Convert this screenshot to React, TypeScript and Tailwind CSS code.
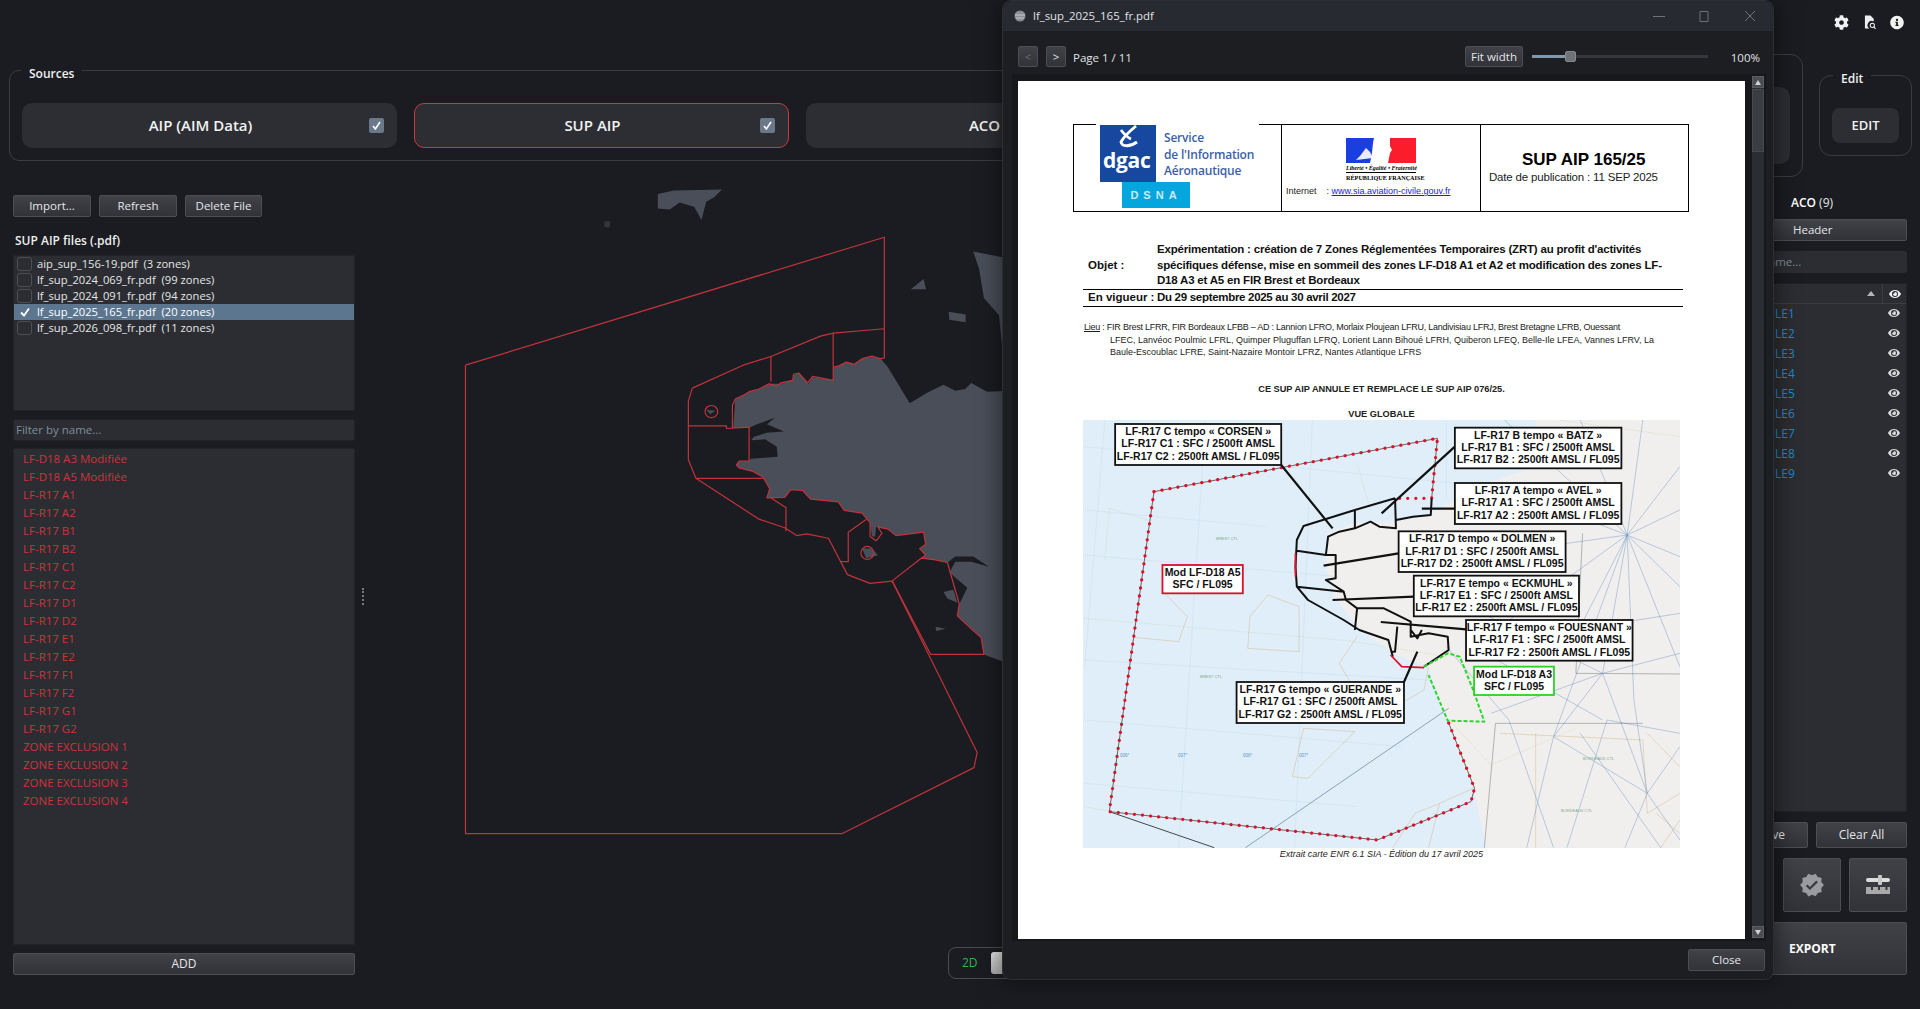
import { FaCog, FaEye, FaInfoCircle } from 'react-icons/fa'
import { MdVerified } from 'react-icons/md'

const files = [
  { name: 'aip_sup_156-19.pdf', zones: 3 },
  { name: 'lf_sup_2024_069_fr.pdf', zones: 99 },
  { name: 'lf_sup_2024_091_fr.pdf', zones: 94 },
  { name: 'lf_sup_2025_165_fr.pdf', zones: 20, checked: true },
  { name: 'lf_sup_2026_098_fr.pdf', zones: 11 },
]

const zones = [
  'LF-D18 A3 Modifiée', 'LF-D18 A5 Modifiée', 'LF-R17 A1', 'LF-R17 A2', 'LF-R17 B1', 'LF-R17 B2', 'LF-R17 C1',
  'LF-R17 C2', 'LF-R17 D1', 'LF-R17 D2', 'LF-R17 E1', 'LF-R17 E2', 'LF-R17 F1', 'LF-R17 F2', 'LF-R17 G1', 'LF-R17 G2',
  'ZONE EXCLUSION 1', 'ZONE EXCLUSION 2', 'ZONE EXCLUSION 3', 'ZONE EXCLUSION 4',
]

const aco = ['LE1', 'LE2', 'LE3', 'LE4', 'LE5', 'LE6', 'LE7', 'LE8', 'LE9']

const chartLabels = [
  { x: 258, y: 72, w: 372, h: 123, color: '#111', lines: ['LF-R17 C tempo « CORSEN »', 'LF-R17 C1 : SFC / 2500ft AMSL', 'LF-R17 C2 : 2500ft AMSL / FL095'] },
  { x: 1019, y: 83, w: 373, h: 122, color: '#111', lines: ['LF-R17 B tempo « BATZ »', 'LF-R17 B1 : SFC / 2500ft AMSL', 'LF-R17 B2 : 2500ft AMSL / FL095'] },
  { x: 1019, y: 249, w: 373, h: 123, color: '#111', lines: ['LF-R17 A tempo « AVEL »', 'LF-R17 A1 : SFC / 2500ft AMSL', 'LF-R17 A2 : 2500ft AMSL / FL095'] },
  { x: 893, y: 394, w: 374, h: 122, color: '#111', lines: ['LF-R17 D tempo « DOLMEN »', 'LF-R17 D1 : SFC / 2500ft AMSL', 'LF-R17 D2 : 2500ft AMSL / FL095'] },
  { x: 927, y: 527, w: 370, h: 122, color: '#111', lines: ['LF-R17 E tempo « ECKMUHL »', 'LF-R17 E1 : SFC / 2500ft AMSL', 'LF-R17 E2 : 2500ft AMSL / FL095'] },
  { x: 1044, y: 660, w: 373, h: 122, color: '#111', lines: ['LF-R17 F tempo « FOUESNANT »', 'LF-R17 F1 : SFC / 2500ft AMSL', 'LF-R17 F2 : 2500ft AMSL / FL095'] },
  { x: 530, y: 846, w: 375, h: 123, color: '#111', lines: ['LF-R17 G tempo « GUERANDE »', 'LF-R17 G1 : SFC / 2500ft AMSL', 'LF-R17 G2 : 2500ft AMSL / FL095'] },
  { x: 364, y: 495, w: 180, h: 85, color: '#d8102a', lines: ['Mod LF-D18 A5', 'SFC / FL095'] },
  { x: 1062, y: 800, w: 179, h: 85, color: '#27d327', lines: ['Mod LF-D18 A3', 'SFC / FL095'] },
]

function Btn({ children, className }: { children?: React.ReactNode; className?: string }) {
  return (
    <div className={'flex items-center justify-center rounded-[2px] border border-[#4c4e53] bg-gradient-to-b from-[#404247] to-[#313338] text-[#e4e6ea] text-[11.5px] ' + (className || '')}>
      {children}
    </div>
  )
}

function GroupLabel({ text, left }: { text: string; left: string }) {
  return <span className={'absolute -top-[4px] bg-[#1b1c21] px-[8px] text-[12px] font-semibold text-[#f0f0f0] leading-[14px] ' + left}>{text}</span>
}

function Check() {
  return (
    <svg viewBox="0 0 15 15" className="w-[15px] h-[15px] rounded-[2px] bg-[#6b7889]">
      <path d="M4 8l2.4 3L11 4" fill="none" stroke="#fff" strokeWidth="1.6" />
    </svg>
  )
}

function SourceCard({ label, active }: { label: string; active?: boolean }) {
  return (
    <div className={'w-[375px] h-[45px] rounded-[10px] bg-[#2c2e33] flex items-center pl-[10px] pr-[13px] ' + (active ? 'border border-[#d0383c]' : '')}>
      <span className="flex-1 text-center text-[15px] font-semibold text-[#f2f2f2]">{label}</span>
      <Check />
    </div>
  )
}

function BrittanyMap() {
  const red = { fill: 'none', stroke: '#c1333b', strokeWidth: 1.2, vectorEffect: 'non-scaling-stroke' as const, strokeLinejoin: 'round' as const }
  return (
    <svg viewBox="0 0 1563 1568" preserveAspectRatio="none" className="absolute left-[28px] top-[3px] w-[620px] h-[680px]">
      <g fill="#4a4e59">
        <path d="M650,32 L690,24 L812,22 L792,40 L772,50 L760,92 L742,62 L705,52 L680,68 L650,66Z" />
        <path d="M1445,165 L1563,186 L1563,400 L1523,430 L1510,312 L1472,272 L1460,205Z" />
        <path d="M1288,252 L1320,228 L1326,252Z M1383,304 L1426,310 L1426,328 L1385,322Z" />
        <path d="M1563,485 L1480,488 L1440,468 L1425,482 L1400,486 L1370,472 L1330,490 L1285,515 L1262,480 L1230,432 L1212,412 L1190,408 L1165,412 L1145,425 L1125,420 L1108,428 L1092,434 L1092,462 L1040,455 L1030,470 L1005,445 L992,450 L990,462 L960,470 L930,470 L905,482 L880,488 L868,495 L845,505 L840,572 L880,572 L895,565 L945,548 L925,563 L968,580 L925,583 L892,592 L885,600 L920,598 L950,615 L952,638 L885,643 L880,648 L855,648 L848,657 L855,664 L890,672 L915,685 L932,712 L925,733 L970,732 L985,714 L1015,716 L1035,736 L1105,742 L1120,762 L1165,768 L1185,790 L1190,822 L1198,822 L1200,800 L1230,805 L1250,820 L1320,812 L1325,840 L1310,850 L1325,865 L1314,872 L1350,876 L1380,882 L1400,868 L1445,868 L1485,892 L1440,880 L1400,880 L1385,905 L1430,940 L1410,978 L1405,1005 L1440,1035 L1465,1055 L1472,1094 L1563,1125Z" />
        <path d="M1370,950 L1395,945 L1405,975 L1380,965Z M1350,1030 L1375,1035 L1352,1040Z M772,530 L795,532 L782,540Z M1165,850 L1190,850 L1205,865 L1175,872Z" />
      </g>
      <path d="M515,95 L530,95 L528,110 L515,108Z" fill="#33363f" />
      <path {...red} d="M165,427 L1221,132 L1221,410 L1210,412 L1190,406 L1165,412 L1145,425 L1125,420 L1108,428 L1092,432" />
      <path {...red} d="M737,480 L865,427 L935,407 L1060,360 L1092,353 L1221,343" />
      <path {...red} d="M165,427 L165,1507 L1115,1507 L1447,1355 L1455,1320 L1241,925" />
      <path {...red} d="M1092,353 L1092,462 L1040,453 L1028,468 L1005,445 L992,448 L990,462 L960,468 L950,475 L930,470 L905,482 L880,488 L868,495 L845,505 L838,520 L838,572" />
      <path {...red} d="M935,407 L935,465" />
      <path {...red} d="M737,480 L727,510 L727,645 L746,688 L905,782 L970,802 L1000,820 L1025,816 L1080,826 L1128,910 L1185,930 L1240,925 L1314,872 L1350,876 L1380,882 L1410,978" />
      <path {...red} d="M727,567 L823,567 L823,573 L880,570 L880,648 L855,648 L848,657 L855,664 L890,672 L915,685 L932,712 L925,733 L970,732 L985,714 L1015,716 L1035,736 L1105,742 L1120,762 L1165,768 L1185,790 L1185,822 L1200,832 L1215,815 L1205,800 L1230,805 L1250,820 L1320,812 L1325,840 L1310,850 L1325,865 L1314,872" />
      <path {...red} d="M746,688 L915,688 M935,733 L973,755 L973,810 M1175,783 L1130,812 L1130,880 L1110,880" />
      <path {...red} d="M1241,925 L1338,1094 L1472,1094 L1465,1055 L1440,1035 L1405,1005 L1410,978" />
      <ellipse {...red} cx="785" cy="534" rx="16" ry="14" />
      <ellipse {...red} cx="1178" cy="860" rx="16" ry="15" />
    </svg>
  )
}

function AipChart() {
  const ns = { vectorEffect: 'non-scaling-stroke' as const, fill: 'none', strokeLinejoin: 'round' as const }
  return (
    <svg viewBox="0 0 597 428" className="block w-[597px] h-[428px] ml-[10px]">
      <rect width="597" height="428" fill="#dfeef9" />
      <g transform="scale(0.44643 0.33333) translate(-186 -60)">
        <path fill="#f0efed" d="M1200,60 L1523,60 L1523,1343 L1090,1343 L1060,1165 L1000,960 L960,800 L880,760 L800,680 L750,590 L730,500 L735,400 L790,370 L885,365 L960,345 L1020,300 L1090,250 L1200,200Z" />
        <g {...ns} stroke="#bfd6e8" strokeWidth="0.8">
          <path d="M190,140 L1020,250 M190,465 L760,530 M190,780 L960,840 M190,960 L900,1040 M460,60 L400,1343 M700,60 L660,1343 M235,60 L190,800 M1000,60 L1000,300 M190,330 L600,380 M190,1150 L800,1220" />
        </g>
        <g {...ns} stroke="#d6b583" strokeWidth="1.2">
          <path d="M365,575 L420,650 L400,725 L300,712 M600,585 L670,620 L670,755 L555,745 L560,650Z M680,985 L795,995 L690,1135 L655,1130Z M1060,1165 L985,1210 L930,1240 L880,1343 M985,1210 L960,1343 M800,710 L760,790 L795,870 L905,905 L950,870 L960,800 M1120,1000 L1440,1020 L1450,1240 L1523,1180 M1200,1000 L1200,1343 M1480,1343 L1523,1260 M1450,1000 L1523,1100 M1470,1240 L1523,1300" />
        </g>
        <g {...ns} stroke="#a9cc78" strokeWidth="1.1" strokeDasharray="2 3">
          <path d="M245,325 L335,362 M245,325 L235,480 M188,655 L780,722 L1000,770 M188,1220 L250,1235 M1020,980 L1100,1095 L1290,985 M800,190 L830,330 M1250,60 L1523,110" />
        </g>
        <g {...ns} stroke="#6a8fc4" strokeWidth="1.1">
          <path d="M1405,405 L1300,60 M1405,405 L1523,200 M1405,405 L1180,290 M1405,405 L1130,60 M1405,405 L1523,470 M1405,405 L1350,820 M1405,405 L1523,800 M1405,405 L1100,700 M1405,405 L1240,1010 M1350,820 L1450,1180 M1350,820 L1100,940 M1350,820 L1523,760 M1450,1180 L1400,1343 M1450,1180 L1523,1040 M1450,1180 L1240,1010 M1450,1180 L1523,1320 M1140,960 L1240,1343 M1360,960 L1270,1343 M1050,620 L1350,820 M1000,740 L1140,960 M1440,60 L1405,405 M1405,405 L1420,900 M1405,405 L1300,680 M1350,820 L1240,1010 M1240,700 L1523,640 M1100,770 L1350,960 M1360,960 L1523,1000 M1420,900 L1450,1180 M1405,405 L1523,330 M1405,405 L1523,560 M1405,405 L1000,480 M1300,1000 L1480,1343 M1240,1010 L1180,1343" />
        </g>
        <g {...ns} stroke="#5d6168" strokeWidth="1.1">
          <path d="M1085,1343 L1110,970 L1440,970 M1290,820 L1523,822 M1305,400 L1290,820" />
        </g>
        <path {...ns} stroke="#44484c" strokeWidth="1" d="M245,1235 L480,1343" />
        <path {...ns} stroke="#8fa1b8" strokeWidth="1" d="M550,1343 L1005,925" />
        <path {...ns} stroke="#444" strokeWidth="0.8" d="M345,275 L980,115 L967,295 M345,275 L245,1235 L845,1320 L1055,1205 L1063,1165 L1003,962" />
        <path {...ns} stroke="#e00f26" strokeWidth="3.2" strokeLinecap="round" strokeDasharray="0.1 8" d="M345,275 L980,115 L967,295 L885,295 M345,275 L245,1235 L845,1320 L1055,1205 L1063,1165 L1003,962" />
        <path {...ns} stroke="#111" strokeWidth="2" d="M885,295 L795,330 L680,378 L665,420 L662,500 L665,560 L690,600 L770,660 L805,690 L870,720 L880,770 M885,295 L887,385 L850,380 L830,365 L795,385 L760,395 L735,410 L730,465 L665,452 M730,465 L752,465 L752,535 L730,540 L770,575 L775,600 L800,625 L860,625 L920,665 L920,710 L960,700 L1003,710 L1005,750 L950,800 M665,560 L770,575 M800,625 L795,690 M890,680 L885,755 L875,755 M795,330 L795,385 M887,360 L925,350 L965,345 L967,295 M920,690 L935,715 L945,690" />
        <path {...ns} stroke="#dc1228" strokeWidth="1.8" d="M875,765 L900,800 L950,803 M662,460 L662,530" />
        <path {...ns} stroke="#111" strokeWidth="2.2" d="M630,195 L745,385 M1019,140 L855,340 M945,326 L1019,326 M725,497 L893,460 M745,600 L927,590 M853,666 L1044,688 M905,846 L935,755" />
        <path {...ns} stroke="#2fd52f" strokeWidth="2" strokeDasharray="4 2" d="M950,800 L1003,760 L1030,770 L1060,870 L1085,965 L1003,962 L960,825" />
      </g>
      <g className="font-['Liberation_Sans',sans-serif]">
        {[['BREST CTL', 133, 120], ['BREST CTL', 117, 258], ['BORDEAUX CTL', 500, 340], ['BORDEAUX CTL', 478, 392]].map(([t, x, y], i) => (
          <text key={i} x={x} y={y} fontSize="4" fill="#7fa886">{t}</text>
        ))}
        {[['006°', 37, 337], ['007°', 95, 337], ['006°', 160, 337], ['007°', 216, 337]].map(([t, x, y], i) => (
          <text key={i} x={x} y={y} fontSize="4.5" fill="#5a95c8">{t}</text>
        ))}
        {chartLabels.map(l => {
          const x = (l.x - 186) / 2.24
          const y = (l.y - 60) / 3
          const w = l.w / 2.24
          const h = l.h / 3
          return (
            <g key={l.lines[0]}>
              <rect x={x} y={y} width={w} height={h} fill="#fff" stroke={l.color} strokeWidth="1.8" />
              {l.lines.map((t, i) => (
                <text key={t} x={x + w / 2} y={y + 11 + i * 12.3} textAnchor="middle" fontSize="10.5" fontWeight="700" fill="#111">{t}</text>
              ))}
            </g>
          )
        })}
      </g>
    </svg>
  )
}

function PdfPage() {
  return (
    <div className="flex-1 h-[858px] bg-white text-black font-['Liberation_Sans',sans-serif] overflow-hidden pt-[43px] pl-[55px]">
      <div className="w-[616px] h-[88px] border-[1.5px] border-black grid grid-cols-[207px_200px_1fr]">
        <div className="relative">
          <span className="absolute -top-[2px] left-[22px] w-[163px] h-[2px] bg-white" />
          <div className="absolute left-[26px] top-0 w-[56px] h-[57px] bg-[#17479e] overflow-hidden">
            <svg viewBox="0 0 56 57" className="absolute inset-0">
              <path d="M36,1 C30,6 24,11 21,17 C22,22 30,22 37,17 M21,5 C24,9 27,12 31,14" fill="none" stroke="#fff" strokeWidth="2.8" />
            </svg>
            <span className="absolute left-[3px] top-[20px] text-[21px] leading-[30px] font-bold text-white font-['Open_Sans',sans-serif] tracking-[-0.3px]">dgac</span>
          </div>
          <div className="absolute left-[48px] top-[57px] w-[68px] h-[26px] bg-[#05a6de] flex items-center justify-center text-[11px] font-bold tracking-[5px] text-[#c9ecf7]">DSNA</div>
          <div className="absolute left-[90px] top-[5px] text-[12px] leading-[16.5px] font-semibold text-[#3c5fa6] whitespace-nowrap font-['Open_Sans',sans-serif] tracking-[-0.2px]">
            <div>Service</div>
            <div>de l'Information</div>
            <div>Aéronautique</div>
          </div>
        </div>
        <div className="relative border-x-[1.5px] border-black">
          <div className="absolute left-[64px] top-[13px] w-[70px] h-[25px] flex">
            <div className="w-[32px] bg-[#1a3fe0]" />
            <div className="w-[8px] bg-white" />
            <div className="flex-1 bg-[#fb1c2c]" />
            <svg viewBox="0 0 70 25" className="absolute inset-0">
              <path d="M28,0 C26,8 27,14 24,25 L42,25 L44,15 L46,12 L44,8 L44,0Z" fill="#fff" />
              <path d="M14,18 L20,10 L24,14 L27,20 L10,22Z" fill="#fff" opacity="0.9" />
            </svg>
          </div>
          <div className="absolute left-[64px] top-[40px] w-[70px] border-b border-black text-center text-[6px] leading-[7px] font-bold italic whitespace-nowrap font-['Liberation_Serif',serif]">Liberté • Égalité • Fraternité</div>
          <div className="absolute left-[64px] top-[49px] w-[70px] text-center text-[6.2px] leading-[7px] font-bold whitespace-nowrap font-['Liberation_Serif',serif]">RÉPUBLIQUE FRANÇAISE</div>
          <div className="absolute left-[4px] top-[60px] text-[9px] leading-[12px] whitespace-nowrap text-[#222]">
            Internet<span className="ml-[10px]">: </span><span className="text-[#1a1aee] underline">www.sia.aviation-civile.gouv.fr</span>
          </div>
        </div>
        <div className="flex flex-col whitespace-nowrap pl-[8px]">
          <div className="mt-[25px] pl-[33px] text-[17px] leading-[20px] font-bold">SUP AIP 165/25</div>
          <div className="-mt-[1px] text-[11.5px] leading-[16px] tracking-[-0.18px] text-[#222]">Date de publication : 11 SEP 2025</div>
        </div>
      </div>

      <div className="mt-[30px] ml-[15px] flex items-center w-[590px] text-[11.5px] font-bold text-[#111]">
        <div className="w-[69px]">Objet :</div>
        <div className="flex-1 leading-[15.7px] whitespace-nowrap tracking-[-0.2px]">
          <div>Expérimentation : création de 7 Zones Réglementées Temporaires (ZRT) au profit d'activités</div>
          <div>spécifiques défense, mise en sommeil des zones LF-D18 A1 et A2 et modification des zones LF-</div>
          <div>D18 A3 et A5 en FIR Brest et Bordeaux</div>
        </div>
      </div>
      <div className="ml-[10px] w-[600px] h-[18px] border-y border-black flex items-center pl-[5px] text-[11.5px] font-bold text-[#111] whitespace-nowrap">
        <div className="w-[69px]">En vigueur :</div>
        <div className="tracking-[-0.3px]">Du 29 septembre 2025 au 30 avril 2027</div>
      </div>

      <div className="mt-[14px] ml-[11px] text-[9px] leading-[12.6px] whitespace-nowrap text-[#222]">
        <div className="tracking-[-0.24px]"><span className="underline">Lieu</span> : FIR Brest LFRR, FIR Bordeaux LFBB – AD : Lannion LFRO, Morlaix Ploujean LFRU, Landivisiau LFRJ, Brest Bretagne LFRB, Ouessant</div>
        <div className="ml-[26px]">LFEC, Lanvéoc Poulmic LFRL, Quimper Pluguffan LFRQ, Lorient Lann Bihoué LFRH, Quiberon LFEQ, Belle-Ile LFEA, Vannes LFRV, La</div>
        <div className="ml-[26px]">Baule-Escoublac LFRE, Saint-Nazaire Montoir LFRZ, Nantes Atlantique LFRS</div>
      </div>

      <div className="mt-[24px] w-[617px] text-center text-[9.2px] font-bold leading-[12px] text-[#222]">CE SUP AIP ANNULE ET REMPLACE LE SUP AIP 076/25.</div>
      <div className="mt-[13px] w-[617px] text-center text-[9.2px] font-bold leading-[12px] text-[#222]">VUE GLOBALE</div>
      <AipChart />
      <div className="w-[617px] text-center text-[9px] italic leading-[12px] text-[#222]">Extrait carte ENR 6.1 SIA - Édition du 17 avril 2025</div>
    </div>
  )
}

function PdfWindow() {
  return (
    <div className="absolute left-[1002px] top-0 w-[772px] h-[980px] rounded-[9px] bg-[#1c1e22] border border-[#2c2f34] shadow-[0_0_24px_rgba(0,0,0,0.55)] flex flex-col text-[#e0e2e6] text-[11.5px]">
      <div className="h-[30px] shrink-0 rounded-t-[9px] bg-[#272a30] flex items-center pl-[11px] pr-[16px]">
        <svg viewBox="0 0 12 12" className="w-[12px] h-[12px]">
          <circle cx="6" cy="6" r="5.5" fill="#8b8e94" />
          <path d="M1,5 H11 M2,8 H10" stroke="#d5d7da" strokeWidth="0.8" />
        </svg>
        <span className="ml-[7px] flex-1 text-[11.4px]">lf_sup_2025_165_fr.pdf</span>
        <svg viewBox="0 0 110 14" className="w-[110px] h-[14px] text-[#6f7278]" fill="none" stroke="currentColor" strokeWidth="1">
          <path d="M6,7.5 H18 M53,2.5 H61 V12.5 H53Z M98,2 L108,12 M108,2 L98,12" />
        </svg>
      </div>
      <div className="h-[43px] shrink-0 flex items-start pt-[15px] pl-[15px] pr-[13px]">
        <Btn className="w-[20px] h-[21px] !text-[#6a6d73]">&lt;</Btn>
        <Btn className="w-[20px] h-[21px] ml-[8px]">&gt;</Btn>
        <span className="ml-[7px] leading-[23px] flex-1">Page 1 / 11</span>
        <Btn className="w-[58px] h-[21px]">Fit width</Btn>
        <div className="ml-[9px] w-[176px] h-[21px] flex items-center">
          <div className="w-[33px] h-[3px] bg-[#8299ad]" />
          <div className="w-[11px] h-[11px] rounded-[2px] bg-[#6f7378] border border-[#85888d]" />
          <div className="flex-1 h-[3px] bg-[#34373c]" />
        </div>
        <span className="w-[52px] text-right leading-[23px]">100%</span>
      </div>
      <div className="h-[867px] shrink-0 ml-[9px] mr-[7px] bg-[#16181c] flex pt-[7px] pl-[6px] pr-[2px]">
        <PdfPage />
        <div className="w-[12px] h-[862px] -mt-[5px] ml-[7px] bg-[#2a2d31] flex flex-col">
          <div className="h-[12px] bg-[#4a4d52] border border-[#5b5e63] flex items-center justify-center"><span className="border-x-[3.5px] border-x-transparent border-b-[5px] border-b-[#cfd1d4]" /></div>
          <div className="mt-[1px] h-[63px] bg-[#3a3d42] border border-[#47494e]" />
          <div className="flex-1" />
          <div className="h-[12px] bg-[#4a4d52] border border-[#5b5e63] flex items-center justify-center"><span className="border-x-[3.5px] border-x-transparent border-t-[5px] border-t-[#cfd1d4]" /></div>
        </div>
      </div>
      <div className="flex-1 flex justify-end items-start pt-[8px] pr-[8px]">
        <Btn className="w-[77px] h-[22px]">Close</Btn>
      </div>
    </div>
  )
}

export default function App() {
  return (
    <div className="relative h-[1009px] w-[1920px] overflow-hidden bg-[#1b1c21] flex flex-col font-['Open_Sans',sans-serif]">
      <div className="h-[54px] shrink-0 flex justify-end items-start pt-[15px] pr-[16px] text-[#f2f2f2]">
        <FaCog className="w-[15px] h-[15px]" />
        <svg viewBox="0 0 13 16" className="ml-[15px] w-[12px] h-[15px]">
          <path d="M1,0.5 H7 L10.5,4 V7 A4,4 0 0 0 6,14.5 H1Z" fill="#eee" />
          <circle cx="9" cy="11" r="2.3" fill="none" stroke="#eee" strokeWidth="1.1" />
          <path d="M10.6,12.8 L12.5,15" stroke="#eee" strokeWidth="1.2" />
        </svg>
        <FaInfoCircle className="ml-[14px] w-[14px] h-[15px]" />
      </div>

      <div className="h-[123px] shrink-0 flex items-center pl-[9px]">
        <div className="relative w-[1188px] h-[91px] rounded-[10px] border border-[#3a3c41] px-[12px] pt-[32px] flex gap-[17px]">
          <GroupLabel text="Sources" left="left-[11px]" />
          <SourceCard label="AIP (AIM Data)" />
          <SourceCard label="SUP AIP" active />
          <SourceCard label="ACO" />
        </div>
        <div className="relative ml-[12px] w-[594px] h-[123px] rounded-[12px] border border-[#3a3c41] py-[32px] px-[12px]">
          <div className="h-[77px] rounded-[10px] bg-[#2c2e33]" />
        </div>
        <div className="relative ml-[16px] w-[93px] h-[81px] rounded-[12px] border border-[#3a3c41] pt-[32px] px-[12px]">
          <GroupLabel text="Edit" left="left-[13px]" />
          <div className="h-[35px] rounded-[8px] bg-[#2c2e33] flex items-center justify-center text-[13px] font-semibold text-[#f2f2f2]">EDIT</div>
        </div>
      </div>

      <div className="flex-1 flex min-h-0">
        <div className="w-[342px] ml-[13px] shrink-0 pt-[18px] pb-[34px] flex flex-col">
          <div className="flex gap-[8px]">
            <Btn className="w-[78px] h-[22px]">Import...</Btn>
            <Btn className="w-[78px] h-[22px]">Refresh</Btn>
            <Btn className="w-[77px] h-[22px]">Delete File</Btn>
          </div>
          <div className="mt-[15px] mb-[5px] h-[18px] pl-[2px] text-[12px] font-semibold leading-[18px] text-[#eee]">SUP AIP files (.pdf)</div>
          <div className="h-[156px] shrink-0 bg-[#2b2d32] border border-[#202226]">
            {files.map(f => (
              <div key={f.name} className={'h-[16px] flex items-center text-[11.2px] text-[#e6e6e6] whitespace-pre ' + (f.checked ? 'bg-[#5c7690] text-white' : '')}>
                <div className={'ml-[3px] w-[15px] h-[14px] rounded-[3px] flex items-center justify-center ' + (f.checked ? '' : 'border border-[#4b4e53]')}>
                  {f.checked && <svg viewBox="0 0 12 12" className="w-[12px] h-[12px]"><path d="M2,6.5 L5,9.5 L10,2.5" fill="none" stroke="#fff" strokeWidth="1.8" /></svg>}
                </div>
                <span className="ml-[5px]">{f.name}  ({f.zones} zones)</span>
              </div>
            ))}
          </div>
          <div className="mt-[8px] h-[22px] shrink-0 bg-[#2b2d32] border border-[#202226] rounded-[2px] pl-[2px] flex items-center text-[11.5px] text-[#7f8e9c]">Filter by name...</div>
          <div className="mt-[7px] flex-1 bg-[#2b2d32] border border-[#202226] pt-[1px] pl-[9px]">
            {zones.map(z => (
              <div key={z} className="h-[18px] leading-[18px] text-[11.5px] text-[#c9353b] whitespace-nowrap">{z}</div>
            ))}
          </div>
          <Btn className="mt-[8px] h-[22px] shrink-0 !text-[12px]">ADD</Btn>
        </div>

        <div className="w-[17px] shrink-0 flex items-center pt-[6px] pl-[7px]">
          <div className="w-[2px] h-[17px] border-l-2 border-dotted border-[#75787d]" />
        </div>

        <div className="relative flex-1">
          <BrittanyMap />
          <div className="absolute left-[576px] bottom-[30px] w-[200px] h-[32px] rounded-[8px] border border-[#4a4c51] flex items-center pl-[13px] text-[12px] text-[#35b24a]">
            2D
            <div className="ml-[13px] w-[60px] h-[22px] rounded-[3px] bg-gradient-to-b from-[#e6e6e6] to-[#a9a9a9]" />
          </div>
        </div>

        <div className="w-[347px] mr-[13px] shrink-0 pt-[18px] pb-[34px] flex flex-col text-[#e4e6ea]">
          <div className="h-[16px] leading-[16px] pl-[231px] text-[12px]"><b className="font-semibold text-white">ACO</b> (9)</div>
          <div className="mt-[8px] shrink-0 h-[22px] pl-[232px] flex items-center rounded-[2px] border border-[#4c4e53] bg-gradient-to-b from-[#404247] to-[#313338] text-[11.5px]">Header</div>
          <div className="mt-[10px] shrink-0 h-[22px] pl-[156px] flex items-center rounded-[3px] bg-[#2b2d32] text-[11.5px] text-[#7f8e9c]">Filter by name...</div>
          <div className="mt-[10px] flex-1 bg-[#2b2d32] border border-[#202226]">
            <div className="h-[20px] flex items-center justify-end border-b border-[#3b3d42]">
              <span className="mr-[7px] border-x-[4px] border-x-transparent border-b-[5px] border-b-[#b4b6b9]" />
              <div className="h-full w-[24px] border-l border-[#3b3d42] flex items-center justify-center"><FaEye className="w-[12px] h-[12px] text-[#f0f0f0]" /></div>
            </div>
            {aco.map(a => (
              <div key={a} className="h-[20px] pl-[214px] pr-[6px] flex items-center justify-between text-[12px] text-[#1989d6]">
                {a}
                <FaEye className="w-[12px] h-[12px] text-[#d8d8d8] -mt-[2px]" />
              </div>
            ))}
          </div>
          <div className="mt-[10px] shrink-0 flex justify-end gap-[8px]">
            <Btn className="w-[91px] h-[26px] !text-[12px]">Remove</Btn>
            <Btn className="w-[91px] h-[26px] !text-[12px]">Clear All</Btn>
          </div>
          <div className="mt-[10px] shrink-0 flex justify-end gap-[8px]">
            <Btn className="w-[58px] h-[54px]"><MdVerified className="w-[26px] h-[26px] text-[#9a9b9e]" /></Btn>
            <Btn className="w-[58px] h-[54px]">
              <svg viewBox="0 0 26 20" className="w-[26px] h-[20px]">
                <rect x="1" y="3" width="24" height="4" rx="2" fill="#dcdcdc" />
                <rect x="13" y="0" width="4" height="10" rx="1" fill="#c8c8c8" />
                <path d="M1,12 V19 H25 V12 H22.5 V15 H20.5 V12 H15 V15 H13 V12 H8 V15 H6 V12Z" fill="#a9a9a9" />
              </svg>
            </Btn>
          </div>
          <div className="mt-[10px] flex-none h-[53px] pl-[228px] flex items-center rounded-[2px] border border-[#4c4e53] bg-gradient-to-b from-[#404247] to-[#313338] text-[12px] font-bold text-white">EXPORT</div>
        </div>
      </div>

      <PdfWindow />
    </div>
  )
}
